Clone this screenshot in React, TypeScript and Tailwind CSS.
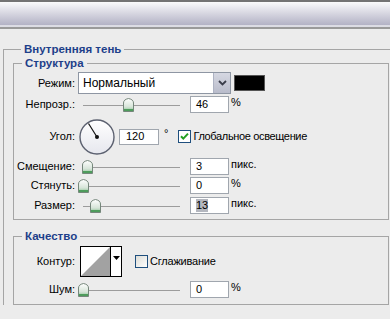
const sans = "font-['Liberation_Sans',Arial,sans-serif]";

function Thumb() {
  return (
    <svg width="11" height="14" viewBox="0 0 11 14">
      <defs>
        <linearGradient id="thumbFill" x1="0" y1="0" x2="0" y2="1">
          <stop offset="0" stopColor="#ffffff" />
          <stop offset="0.65" stopColor="#d6e4d8" />
          <stop offset="1" stopColor="#7fbf8a" />
        </linearGradient>
      </defs>
      <path d="M0.5 5 Q0.5 1.5 5.5 0.5 Q10.5 1.5 10.5 5 V13.5 H0.5 Z" fill="url(#thumbFill)" stroke="#75877b" />
      <rect x="1" y="11" width="9" height="2" fill="#4e9c5c" />
    </svg>
  );
}

function Slider({ at }: { at: number }) {
  return (
    <div className="relative h-[14px] w-[100px]">
      <div className="absolute left-[3px] right-0 top-[7px] h-px bg-[#9c9c9c]" />
      <div className="absolute top-0" style={{ left: at - 5.5 }}>
        <Thumb />
      </div>
    </div>
  );
}

function Field({ value, selected }: { value: string; selected?: boolean }) {
  return (
    <div className="flex h-[17px] w-[39px] items-center border border-[#a0a6ae] bg-white pl-[5px] text-[11px] text-black">
      <span className={selected ? "bg-[#b4b7bf] leading-[13px]" : "leading-[13px]"}>{value}</span>
    </div>
  );
}

function Label({ children }: { children: string }) {
  return <div className="w-[61px] shrink-0 text-right text-[11px] leading-[13px] text-black">{children}</div>;
}

function SliderRow({ label, at, value, unit, selected, className }: { label: string; at: number; value: string; unit: string; selected?: boolean; className: string }) {
  return (
    <div className={"flex h-[17px] items-center " + className}>
      <Label>{label}</Label>
      <div className="ml-[5px]">
        <Slider at={at} />
      </div>
      <div className="ml-[10px]">
        <Field value={value} selected={selected} />
      </div>
      <span className="ml-[2px] self-start text-[11px] leading-[13px] text-black">{unit}</span>
    </div>
  );
}

function Dial() {
  return (
    <svg width="36" height="36" viewBox="0 0 36 36">
      <defs>
        <linearGradient id="dialFill" x1="0" y1="0" x2="0" y2="1">
          <stop offset="0" stopColor="#ffffff" />
          <stop offset="1" stopColor="#e6e7ee" />
        </linearGradient>
      </defs>
      <circle cx="18" cy="18" r="17" fill="url(#dialFill)" stroke="#5c6170" strokeWidth="1.4" />
      <line x1="18" y1="18" x2="9.5" y2="4.5" stroke="#111" strokeWidth="1.2" />
      <circle cx="18" cy="18" r="2" fill="#111" />
    </svg>
  );
}

function Check({ checked }: { checked?: boolean }) {
  return (
    <svg width="13" height="13" viewBox="0 0 13 13">
      <defs>
        <linearGradient id="boxFill" x1="0" y1="0" x2="1" y2="1">
          <stop offset="0" stopColor="#dcdcd6" />
          <stop offset="1" stopColor="#ffffff" />
        </linearGradient>
      </defs>
      <rect x="0.5" y="0.5" width="12" height="12" fill={checked ? "#ffffff" : "url(#boxFill)"} stroke="#1f4f7e" />
      {checked && <path d="M3 6.2 L5.3 8.6 L10 3.6" fill="none" stroke="#22a022" strokeWidth="2" />}
    </svg>
  );
}

function Legend({ children }: { children: string }) {
  return <legend className="ml-[8px] px-[3px] text-[11.5px] font-bold leading-[14px] text-[#1e3f8a]">{children}</legend>;
}

export default function App() {
  return (
    <div className={"h-[319px] w-[390px] overflow-hidden bg-[#ececec] " + sans}>
      <div className="h-[2px] bg-[#747474]" />
      <div className="h-[23px] bg-gradient-to-b from-[#fbfbfc] to-[#b3b2c5]" />
      <div className="h-[2px] bg-[#dcdce4]" />
      <div className="h-[2px] bg-[#9a9a9a]" />

      <fieldset className="ml-[3px] mt-[13px] border-l border-t border-[#a5a5a5] pl-[9px]">
        <Legend>Внутренняя тень</Legend>

        <fieldset className="w-[376px] border border-[#a5a5a5] pb-[5px]">
          <Legend>Структура</Legend>

          <div className="mt-[2px] flex h-[22px] items-center">
            <Label>Режим:</Label>
            <div className="ml-[3px] flex h-[22px] w-[153px] items-center border border-[#8e96a3] bg-white">
              <span className="flex-1 pl-[4px] text-[12px] text-black">Нормальный</span>
              <div className="flex h-full w-[17px] items-center justify-center border-l border-[#aeb3c3] bg-gradient-to-b from-[#d6d8e2] to-[#b9bccb]">
                <svg width="9" height="6" viewBox="0 0 9 6">
                  <path d="M1 1 L4.5 4.5 L8 1" fill="none" stroke="#3a3d4a" strokeWidth="1.8" />
                </svg>
              </div>
            </div>
            <div className="ml-[3px] h-[16px] w-[31px] border border-[#555] bg-black" />
          </div>

          <SliderRow className="mt-[2px]" label="Непрозр.:" at={48} value="46" unit="%" />

          <div className="mt-[5px] flex h-[37px] items-center">
            <Label>Угол:</Label>
            <div className="ml-[4px]">
              <Dial />
            </div>
            <div className="ml-[4px] flex h-[16px] w-[40px] items-center border border-[#a0a6ae] bg-white pl-[6px] text-[11px] text-black">120</div>
            <span className="ml-[5px] mb-[6px] text-[11px] leading-none text-black">°</span>
            <div className="ml-[10px] flex items-center">
              <Check checked />
              <span className="ml-[2px] text-[11px] leading-[13px] tracking-[-0.35px] text-black">Глобальное освещение</span>
            </div>
          </div>

          <SliderRow className="mt-[3px]" label="Смещение:" at={7} value="3" unit="пикс." />
          <SliderRow className="mt-[2px]" label="Стянуть:" at={3} value="0" unit="%" />
          <SliderRow className="mt-[3px]" label="Размер:" at={15} value="13" unit="пикс." selected />
        </fieldset>

        <fieldset className="mt-[9px] w-[376px] border border-[#a5a5a5] pb-[6px]">
          <Legend>Качество</Legend>

          <div className="mt-[3px] flex h-[31px] items-center">
            <Label>Контур:</Label>
            <div className="ml-[5px] flex h-[31px] w-[42px] border border-black bg-white">
              <svg width="29" height="29" viewBox="0 0 29 29" className="block">
                <polygon points="0,29 29,0 29,29" fill="#a2a2a2" />
              </svg>
              <div className="flex flex-1 justify-center border-l border-black pt-[9px]">
                <svg width="7" height="4" viewBox="0 0 7 4">
                  <polygon points="0,0 7,0 3.5,4" fill="#000" />
                </svg>
              </div>
            </div>
            <div className="ml-[13px] flex items-center">
              <Check />
              <span className="ml-[2px] text-[11px] leading-[13px] tracking-[-0.2px] text-black">Сглаживание</span>
            </div>
          </div>

          <SliderRow className="mt-[4px]" label="Шум:" at={3} value="0" unit="%" />
        </fieldset>
      </fieldset>
    </div>
  );
}
